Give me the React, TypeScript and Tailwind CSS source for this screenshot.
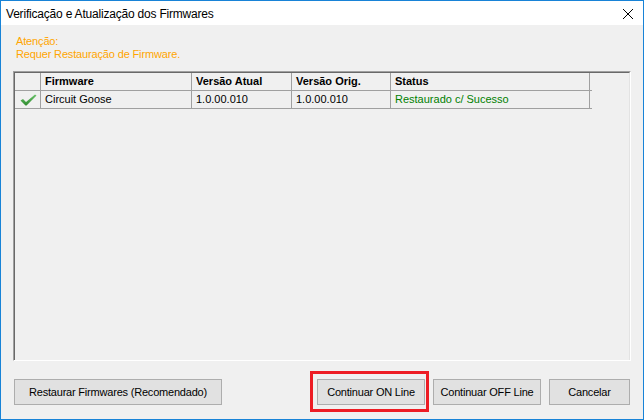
import React from "react";

const sans = { fontFamily: '"Liberation Sans", Arial, sans-serif' };

function Btn({ children, w }: { children: React.ReactNode; w: string }) {
  return (
    <div
      className={`${w} h-[26px] bg-[#e1e1e1] border border-[#adadad] flex items-center justify-center text-[11px] tracking-[-0.2px] text-black`}
    >
      {children}
    </div>
  );
}

export default function App() {
  return (
    <div className="w-[644px] h-[420px] border border-[#1883d7] flex flex-col bg-[#f0f0f0]" style={sans}>
      <div className="h-[24px] bg-white flex items-center justify-between shrink-0">
        <div className="pl-[5px] text-[12px] tracking-[-0.2px] text-black pt-[1px]">
          Verificação e Atualização dos Firmwares
        </div>
        <svg width="12" height="12" viewBox="0 0 12 12" className="mr-[9px] mt-[1px]">
          <path d="M1 1 L11 11 M11 1 L1 11" stroke="#000" strokeWidth="1" />
        </svg>
      </div>
      <div className="flex-1 flex flex-col pt-[10px] pl-[12px] pr-[12px]">
        <div className="pl-[3px] text-[11px] leading-[13px] tracking-[-0.15px] text-[#ffa500]">
          <div>Atenção:</div>
          <div>Requer Restauração de Firmware.</div>
        </div>
        <div className="mt-[10px] h-[290px] border-t border-l border-t-[#a0a0a0] border-l-[#a0a0a0] border-b border-r border-b-white border-r-white">
          <div className="h-full border-t border-l border-[#696969] border-b-0 border-r border-r-[#e3e3e3] bg-[#f0f0f0]">
            <div className="w-[577px] text-[11px] text-black">
              <div className="flex h-[18px] border-b border-[#a0a0a0] font-bold">
                <div className="w-[26px] border-r border-[#a0a0a0]" />
                <div className="w-[151px] border-r border-[#a0a0a0] pl-[4px] flex items-center">Firmware</div>
                <div className="w-[100px] border-r border-[#a0a0a0] pl-[4px] flex items-center">Versão Atual</div>
                <div className="w-[99px] border-r border-[#a0a0a0] pl-[4px] flex items-center">Versão Orig.</div>
                <div className="w-[199px] border-r border-[#a0a0a0] pl-[4px] flex items-center">Status</div>
              </div>
              <div className="flex h-[18px] border-b border-[#a0a0a0]">
                <div className="w-[26px] border-r border-[#a0a0a0] flex items-center justify-center pl-[2px]">
                  <svg width="17" height="12" viewBox="0 0 17 12">
                    <defs>
                      <linearGradient id="g" x1="0" y1="0" x2="0" y2="1">
                        <stop offset="0" stopColor="#6cc26c" />
                        <stop offset="1" stopColor="#2e8b2e" />
                      </linearGradient>
                    </defs>
                    <path d="M0.5 6.5 L3 5 L6 8 L15 0.5 L16.5 1.5 L6.5 11.5 L5.5 11.5 Z" fill="url(#g)" />
                  </svg>
                </div>
                <div className="w-[151px] border-r border-[#a0a0a0] pl-[4px] flex items-center">Circuit Goose</div>
                <div className="w-[100px] border-r border-[#a0a0a0] pl-[4px] flex items-center">1.0.00.010</div>
                <div className="w-[99px] border-r border-[#a0a0a0] pl-[4px] flex items-center">1.0.00.010</div>
                <div className="w-[199px] border-r border-[#a0a0a0] pl-[4px] flex items-center text-[#008000]">
                  Restaurado c/ Sucesso
                </div>
              </div>
            </div>
          </div>
        </div>
        <div className="mt-[18px] flex pl-[1px]">
          <Btn w="w-[208px]">Restaurar Firmwares (Recomendado)</Btn>
          <div className="ml-[95px] relative">
            <div className="absolute left-[-7px] top-[-8px] w-[119px] h-[41px] border-[3px] border-[#ed1c24]" />
            <Btn w="w-[108px]">Continuar ON Line</Btn>
          </div>
          <div className="ml-[8px]">
            <Btn w="w-[108px]">Continuar OFF Line</Btn>
          </div>
          <div className="ml-[8px]">
            <Btn w="w-[81px]">Cancelar</Btn>
          </div>
        </div>
      </div>
    </div>
  );
}
